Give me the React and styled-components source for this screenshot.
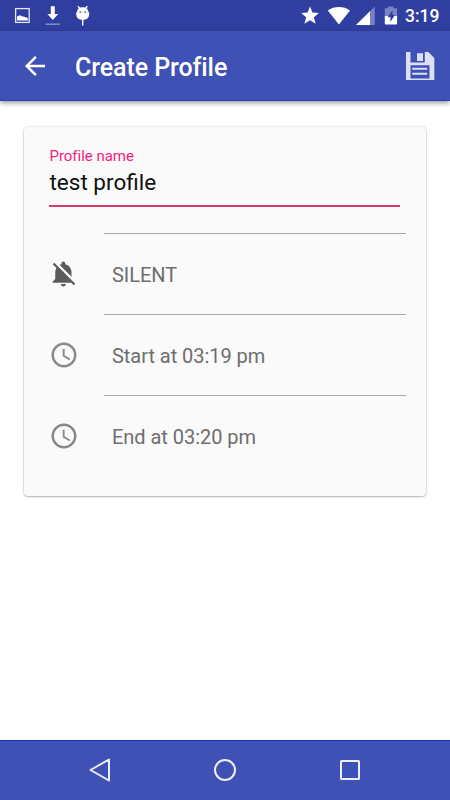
import React from "react";
import styled, { createGlobalStyle } from 'styled-components';

const GlobalStyle = createGlobalStyle`
* { box-sizing: border-box; }
body {
  margin: 0;
  background: #fff;
  font-family: Roboto, sans-serif;
}
svg { display: block; flex: none; }
`

const SCREEN = styled.div`
display: flex;
flex-direction: column;
width: 450px;
height: 800px;
overflow: hidden;
background: #fff;
`

const STATUSBAR = styled.div`
display: flex;
justify-content: space-between;
flex: none;
height: 31px;
background: #303f9f;
`

const CLOCK = styled.span`
width: 45px;
font-size: 17.5px;
font-weight: 500;
line-height: 33px;
color: #fff;
`

const STATUSRIGHT = styled.div`
display: flex;
`

const TOOLBAR = styled.header`
display: flex;
align-items: center;
flex: none;
height: 70px;
padding: 0 15px 0 20px;
background: #3f51b5;
border-bottom: 1px solid #2a40b0;
box-shadow: 0 2px 5px rgba(0, 0, 0, 0.4);
`

const TITLE = styled.h1`
flex: 1;
margin: 5px 0 0 25px;
font-size: 25px;
font-weight: 500;
line-height: 30px;
letter-spacing: -0.08px;
color: #fff;
`

const CONTENT = styled.main`
flex: 1;
padding: 26px 24px 0;
`

const CARD = styled.section`
height: 369px;
padding: 20px 20px 0 25px;
border-radius: 4px;
background: #fafafa;
box-shadow: 0 0 1px 1px rgba(0, 0, 0, 0.08), 0 1px 2px rgba(0, 0, 0, 0.24);
`

const FIELD = styled.label`
display: block;
width: 351px;
height: 60px;
border-bottom: 2px solid #d83a72;
margin-bottom: 26px;
`

const LABEL = styled.span`
display: block;
padding-left: 0.5px;
font-size: 15px;
line-height: 18px;
letter-spacing: -0.03px;
color: #f71a7f;
`

const VALUE = styled.span`
display: block;
padding: 3px 0 0 0.5px;
font-size: 22.5px;
line-height: 28px;
color: #111;
`

const ROW = styled.div`
display: flex;
align-items: center;
gap: 25px;
height: 81px;
`

const ROWTEXT = styled.div`
display: flex;
align-items: center;
flex: 1;
height: 100%;
padding: 2px 0 0 8px;
border-top: 1px solid #a9a9a9;
font-size: 20px;
letter-spacing: -0.04px;
color: #6e6e6e;
`

const NAVBAR = styled.nav`
display: flex;
justify-content: center;
align-items: center;
gap: 95px;
flex: none;
height: 60px;
padding-bottom: 1px;
background: #3f51b5;
border-top: 1px solid #1f35b0;
`

function NotificationIcons() {
    return (
        <svg width="110" height="31" viewBox="0 0 110 31">
            <rect x="15.6" y="8.6" width="13.6" height="13.8" fill="none" stroke="#e4e6f5" strokeWidth="1.3" />
            <path d="M17 20.5v-4l3-1.2 2 1 3 .6 2.8 1v2.6z" fill="#fff" />
            <path d="M50.8 6.3h4v7.6h3.4L52.8 20l-5.4-6.1h3.4z" fill="#fff" />
            <path d="M45.7 24.2h14" stroke="#8992cb" strokeWidth="1.4" />
            <path d="M76.2 12.2h13v1.6c0 4.2-2.6 6.2-6.5 6.2s-6.5-2-6.5-6.2z" fill="#fff" />
            <path d="M77 12.5c0-3.4 2.3-5.2 5.7-5.2s5.7 1.8 5.7 5.2z" fill="#fff" />
            <path d="M78.3 6.6l2 2.4M87 6.6l-2 2.4M82.7 20v5" stroke="#fff" strokeWidth="1.4" strokeLinecap="round" />
            <circle cx="80.3" cy="12" r="0.8" fill="#303f9f" />
            <circle cx="85.1" cy="12" r="0.8" fill="#303f9f" />
        </svg>
    );
}

function SystemIcons() {
    return (
        <svg width="105" height="31" viewBox="300 0 105 31">
            <path d="M310 6.6l2.4 6 6.5.5-5 4.1 1.7 6.6-5.6-3.6-5.6 3.6 1.7-6.6-5-4.1 6.5-.5z" fill="#fff" />
            <path d="M327.8 10.4c6.5-4.6 15.8-4.6 22.2 0L338.9 24.6z" fill="#fff" />
            <path d="M374.8 6.4V25H356z" fill="#7881c3" />
            <path d="M370 11.2V25h-14z" fill="#fff" />
            <path d="M384.8 8.2h3.3V6.4h5.4v1.8h3.6v8.2h-12.3z" fill="#7881c3" />
            <path d="M384.8 16h12.3v7.4c0 .7-.5 1.2-1.2 1.2H386c-.7 0-1.2-.5-1.2-1.2z" fill="#fff" />
            <path d="M392.5 10.2l-4.8 7h2.8v4.9l4.3-7.2h-2.3z" fill="#303f9f" />
        </svg>
    );
}

function BackIcon() {
    return (
        <svg width="30" height="30" viewBox="0 0 24 24" fill="#fff">
            <path d="M20 11H7.83l5.59-5.59L12 4l-8 8 8 8 1.41-1.41L7.83 13H20v-2z" />
        </svg>
    );
}

function SaveIcon() {
    return (
        <svg width="29" height="28" viewBox="0 0 29 28" fill="#dde0f3">
            <path d="M0 0h4.5v10.4h14.3V0h3.6l5.9 6v22H0zM4.5 13.2v13.3h19V13.2z" fillRule="evenodd" />
            <path d="M11 1.3h6v7.7h-6zM6.2 15.7h15v2h-15zM6.2 20.8h15v2h-15z" />
        </svg>
    );
}

function BellOffIcon() {
    return (
        <svg width="30" height="30" viewBox="0 0 24 24" fill="#5c5c5c">
            <path d="M11.5 22c1.1 0 2-.9 2-2h-4c0 1.1.89 2 2 2zM18 10.5c0-3.07-2.13-5.64-5-6.32V3.5c0-.83-.67-1.5-1.5-1.5S10 2.67 10 3.5v.68c-.51.12-.99.32-1.45.56L18 14.18V10.5zm-.27 8.5l2 2L21 19.73 4.27 3 3 4.27l2.92 2.92C5.34 8.16 5 9.29 5 10.5V16l-2 2v1h14.73z" />
        </svg>
    );
}

function TimeIcon() {
    return (
        <svg width="30" height="30" viewBox="0 0 24 24" fill="#888">
            <path d="M11.99 2C6.47 2 2 6.48 2 12s4.47 10 9.99 10C17.52 22 22 17.52 22 12S17.52 2 11.99 2zM12 20c-4.42 0-8-3.58-8-8s3.58-8 8-8 8 3.58 8 8-3.58 8-8 8z" />
            <path d="M12.5 7H11v6l5.25 3.15.75-1.23-4.5-2.67z" />
        </svg>
    );
}

function NavIcon({ children }) {
    return (
        <svg width="30" height="30" viewBox="0 0 30 30" fill="none" stroke="#eceef8" strokeWidth="2" strokeLinejoin="round">
            {children}
        </svg>
    );
}

const rows = [
    { icon: <BellOffIcon />, text: 'SILENT' },
    { icon: <TimeIcon />, text: 'Start at 03:19 pm' },
    { icon: <TimeIcon />, text: 'End at 03:20 pm' },
]

export default function App() {
    return (
        <SCREEN>
            <GlobalStyle />
            <STATUSBAR>
                <NotificationIcons />
                <STATUSRIGHT>
                    <SystemIcons />
                    <CLOCK>3:19</CLOCK>
                </STATUSRIGHT>
            </STATUSBAR>
            <TOOLBAR>
                <BackIcon />
                <TITLE>Create Profile</TITLE>
                <SaveIcon />
            </TOOLBAR>
            <CONTENT>
                <CARD>
                    <FIELD>
                        <LABEL>Profile name</LABEL>
                        <VALUE>test profile</VALUE>
                    </FIELD>
                    {rows.map((row) => (
                        <ROW key={row.text}>
                            {row.icon}
                            <ROWTEXT>{row.text}</ROWTEXT>
                        </ROW>
                    ))}
                </CARD>
            </CONTENT>
            <NAVBAR>
                <NavIcon><path d="M24 4.5v21L5.5 15z" /></NavIcon>
                <NavIcon><circle cx="15" cy="15" r="10" /></NavIcon>
                <NavIcon><rect x="6" y="6" width="18" height="18" rx="0.5" /></NavIcon>
            </NAVBAR>
        </SCREEN>
    );
}
